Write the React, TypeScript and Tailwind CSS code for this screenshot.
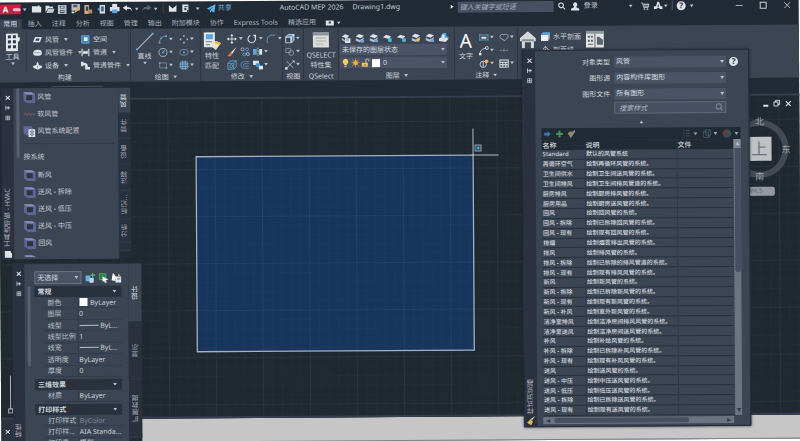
import type { ReactNode } from "react";

const SANS = "font-['Noto_Sans','Noto_Sans_CJK_SC',sans-serif]";

/* ---------- icon helpers ---------- */

const WHITE = "#dfe3e8";
const BLUE = "#5fa8dc";

function Svg({ children, className = "size-3" }: { children: ReactNode; className?: string }) {
  return (
    <svg viewBox="0 0 12 12" className={`${className} shrink-0`} fill="none" stroke={WHITE} strokeWidth="1" aria-hidden="true">
      {children}
    </svg>
  );
}

function Caret({ up = false }: { up?: boolean }) {
  return (
    <svg viewBox="0 0 4 3" className="h-[3px] w-1 shrink-0" aria-hidden="true">
      <path d={up ? "M0 3h4L2 0z" : "M0 0h4L2 3z"} fill="#b9c0ca" />
    </svg>
  );
}

const icons: Record<string, ReactNode> = {
  newFile: <path d="M0 2.500h7l1-1h1.500v1.500H11.500v7H0z" fill={WHITE} stroke="none" />,
  open: (
    <g stroke="none">
      <path d="M1 10V2h4l1 1h4v2H4z" fill={WHITE} />
      <path d="M4 5.500h8L10 10.500H2z" fill="#c3c9d1" />
    </g>
  ),
  save: (
    <g stroke="none">
      <path d="M0 0h12v12H0z" fill="#b9c0ca" />
      <path d="M3 1h6v3.500H3zM3 7h6v4H3z" fill="#4b5563" />
      <path d="M4 2h4v1.500H4zM4 8h4v1H4z" fill={WHITE} />
    </g>
  ),
  saveAs: (
    <g stroke="none">
      <path d="M1 0h10v8H1z" fill="#b9c0ca" />
      <path d="M3 1h5v3H3z" fill="#4b5563" />
      <path d="M4 11l1-3 5-4 1.500 1.500-5 4z" fill="#e0a948" />
      <path d="M1 9h3v2H1z" fill={WHITE} />
    </g>
  ),
  webOpen: (
    <g stroke="none">
      <path d="M1 0h6v12H1z" fill="#cdb489" />
      <path d="M3 2h3v6H3z" fill="#3a4452" />
      <path d="M6 6h5.500v5.500H6z" fill="#b58d4e" />
    </g>
  ),
  webSave: (
    <g stroke="none">
      <path d="M4 0h7v12H4z" fill={WHITE} />
      <path d="M5.500 2h4v7h-4z" fill="#3b6f9c" />
      <path d="M1 6l3-3v6z" fill={BLUE} />
    </g>
  ),
  print: (
    <g stroke="none">
      <path d="M3 0h6v4H3z" fill={WHITE} />
      <path d="M0 4h12v5H0z" fill={WHITE} />
      <path d="M3 7h6v4.500H3z" fill={BLUE} />
    </g>
  ),
  undo: <path d="M5 1.500L0 5l5 3.500V6.500c3 0 5.500 0 6.500 3C11.300 5.500 9 4 5 4z" fill={WHITE} stroke="none" />,
  redo: <path d="M7 1.500L12 5 7 8.500V6.500c-3 0-5.500 0-6.500 3C.7 5.500 3 4 7 4z" fill="#566170" stroke="none" />,
  mail: <path d="M0 1l6 5 6-5v10H0z" fill={WHITE} stroke="none" />,
  sheet: (
    <g stroke="none">
      <path d="M1 0h9v12H1z" fill={WHITE} />
      <path d="M4 3h5v1H4zM4 5h3v4H4zM8 8l4 2-4 2z" fill="#303946" />
    </g>
  ),
  send: <path d="M0 6L12 0 10 11.500 6 9 4.500 12V8L9 3 3.500 7.500z" fill="#5fb4ea" stroke="none" />,
  search: (
    <g strokeWidth="1.500">
      <circle cx="5" cy="5" r="3.500" />
      <path d="M7.500 7.500L11 11" />
    </g>
  ),
  user: <path d="M6 .500a3 3 0 0 1 1.500 5.500v1l4 2v2.500H.500V9l4-2V6A3 3 0 0 1 6 .500z" fill={WHITE} stroke="none" />,
  cart: (
    <g>
      <path d="M.500 2h2l1.500 6h6l1-4.500H3.500" />
      <path d="M4 4.500h6.500M4.300 6.300h6" />
      <circle cx="5" cy="10.300" r=".8" />
      <circle cx="9" cy="10.300" r=".8" />
    </g>
  ),
  autodesk: <path d="M5 0h2l2 6.500h3v3.500H8.500L6 8l-2.500 2H0V6.500h3zM6 3L5 7h2z" fill={WHITE} stroke="none" />,
  duct: (
    <g stroke="none">
      <path d="M3 2.500h9L9.500 9.500H0z" fill={WHITE} />
      <path d="M4.500 4.500H9L8 7.500H3.200z" fill="#3a4351" />
    </g>
  ),
  fitting: (
    <g stroke="none">
      <path d="M2 3l3-1h3l3 1 1 3-1 3-3 1H4L1 9 0 6z" fill={WHITE} />
      <path d="M2 6h8" stroke="#8b94a0" />
    </g>
  ),
  equip: (
    <g stroke="none">
      <path d="M4.500 3.500L6 .500l1.500 3V5L12 6.500v2L6 11.500 0 8.500v-2L4.500 5z" fill={WHITE} />
      <path d="M6 6v4" stroke="#7d8794" />
    </g>
  ),
  space: (
    <g>
      <path d="M1 1h10v10H1z" fill="#3f86bf" stroke="#69aee0" />
      <path d="M4 3h5v5H4z" fill="#d7ebfa" stroke="none" />
    </g>
  ),
  pipe: (
    <g>
      <path d="M1.500 1v10M10.500 1v10" strokeWidth="1.500" />
      <path d="M3.500 4c2 1 3 1 5 0v4c-2-1-3-1-5 0z" fill={WHITE} />
    </g>
  ),
  elbow: <path d="M0 1h3v1.500c5 0 6 2.500 6 5.500h3v3.500H5.500V8c0-2-.500-2.500-2.500-2.500V7H0z" fill={WHITE} stroke="none" />,
  arc: (
    <g stroke="#8da3b8">
      <path d="M2 10C2 5 5 2 10 2" />
      <path d="M1 9h2v2H1zM9 1h2v2H9zM3 3.500h2v2H3z" fill={BLUE} stroke="none" />
    </g>
  ),
  circle: (
    <g>
      <circle cx="6" cy="6" r="4.800" stroke="#b9c0ca" />
      <path d="M6 6l3-4" stroke={BLUE} />
      <path d="M5 5h2v2H5z" fill={BLUE} stroke="none" />
    </g>
  ),
  rect: (
    <g>
      <path d="M2 3h8v6H2z" stroke="#7f8b9a" />
      <path d="M1 2h2v2H1zM9 8h2v2H9z" fill={BLUE} stroke="none" />
    </g>
  ),
  points: <path d="M5 1h2v2H5zM1 5h2v2H1zM9 5h2v2H9zM5 9h2v2H5z" fill="#9fb0c2" stroke="none" />,
  ellipse: (
    <g>
      <ellipse cx="6" cy="6" rx="5" ry="3.500" stroke="#7c93a8" />
      <path d="M5 5h2v2H5z" fill={BLUE} stroke="none" />
    </g>
  ),
  hatch: (
    <g stroke={BLUE}>
      <path d="M2 2h8v8H2z" fill="#315f86" />
      <path d="M4.500 0v12M7.500 0v12M0 4.500h12M0 7.500h12" stroke="#b7c9da" strokeWidth=".7" />
    </g>
  ),
  move: (
    <g>
      <path d="M6 1v10M1 6h10" />
      <path d="M6 0l2 2.500H4zM6 12l2-2.500H4zM0 6l2.500-2v4zM12 6L9.500 4v4z" fill={WHITE} stroke="none" />
    </g>
  ),
  rotate: (
    <g>
      <path d="M4 2a4.500 4.500 0 1 0 5.500 1.500" strokeWidth="1.200" />
      <path d="M7 1h4v4z" fill={WHITE} stroke="none" />
    </g>
  ),
  fillet: (
    <g>
      <path d="M1.500 11V8C1.500 4 4 1.500 8 1.500" stroke={BLUE} />
      <path d="M8 1.500h3.500" stroke="#8d98a6" />
    </g>
  ),
  brush: (
    <g stroke="none">
      <path d="M11.500 0L6.500 8 4.500 6.500z" fill="#f0e2c0" />
      <path d="M6.500 8l-2 3H0L4.500 6.500z" fill="#e5783a" />
    </g>
  ),
  copy: (
    <g stroke="#b9c4d0">
      <circle cx="3" cy="3" r="1.800" />
      <circle cx="8.500" cy="3" r="1.800" stroke={BLUE} />
      <circle cx="5" cy="9" r="1.800" stroke={BLUE} />
      <circle cx="9.500" cy="8.500" r="1.800" />
    </g>
  ),
  mirror: (
    <g>
      <path d="M0 2.500h4.500v7H0z" fill={BLUE} stroke="none" />
      <path d="M6 1v10" strokeDasharray="2 1" />
      <path d="M7.500 2.500H11v7H7.500z" fill="#dce8f3" stroke="none" />
    </g>
  ),
  box3d: (
    <g stroke={BLUE}>
      <path d="M1 4h7v7H1zM1 4l3-3h7v7l-3 3M8 4l3-3" />
      <circle cx="5" cy="7.500" r="1.800" />
    </g>
  ),
  offset: <path d="M11 2H5a4 4 0 0 0 0 8h6M11 4.500H5.500a1.500 1.500 0 0 0 0 3H11" stroke="#5a8fc0" />,
  scale: (
    <g stroke="none">
      <path d="M0 1h7v5H0z" fill="#d7e6f3" />
      <path d="M3.500 4H8.500v4.500h-5z" fill="#3f94cf" />
      <path d="M7 7h5v4.500H7z" fill="#d7e6f3" />
    </g>
  ),
  viewCube: (
    <g>
      <path d="M1 4h6v7H1z" fill="#3a4351" />
      <path d="M1 4l3-3h7L8 4zM8 4l3-3v7l-3 3z" fill="#3f94cf" />
    </g>
  ),
  shapes: (
    <g stroke="#8f99a6">
      <path d="M1 2h6v5H1z" />
      <circle cx="7.500" cy="7.500" r="3" />
    </g>
  ),
  trim: (
    <g>
      <path d="M2 2l8 8M10 2l-8 8" stroke="#b9c0ca" />
      <path d="M8.500 1h3v3zM0 9h3v3H0z" fill={WHITE} stroke="none" />
    </g>
  ),
  layerProps: (
    <g stroke="none">
      <path d="M1 4l4-3 5 2-3 3z" fill={WHITE} />
      <path d="M1 6l4 2v2L1 8z" fill="#aeb6c1" />
      <path d="M5 6h6.500v5.500H5z" fill={WHITE} />
      <path d="M6.500 7.500h3v1h-3z" fill="#3b82b8" />
    </g>
  ),
  layerOff: (
    <g stroke="none">
      <path d="M1 4l4-3 6 2-4 3z" fill={WHITE} />
      <path d="M1 6l5 2 5-3-1 3-4 3-5-2z" fill="#b5bdc8" />
      <path d="M7 8h4v3H7z" fill={BLUE} />
    </g>
  ),
  layerPin: (
    <g stroke="none">
      <path d="M0 5l4-3 6 2-3 3z" fill={WHITE} />
      <circle cx="8.500" cy="8.500" r="2.500" fill="#47b3d1" />
    </g>
  ),
  layerSun: (
    <g stroke="none">
      <path d="M1 4l4-3 6 2-4 3z" fill={WHITE} />
      <path d="M1 6l5 2 5-3v3l-5 3-5-2z" fill="#b5bdc8" />
      <circle cx="8.500" cy="8.500" r="2" fill="#e9c25f" />
    </g>
  ),
  layerCurrent: (
    <g stroke="none">
      <path d="M2 4l3-4h4v4l3 1-3 3H3z" fill="#4c9fd6" />
      <path d="M0 7l4-2 8 2-4 4-8-1z" fill={WHITE} />
      <path d="M4 2h3v4H4z" fill="#dbeaf6" />
    </g>
  ),
  dim: (
    <g stroke={BLUE}>
      <path d="M1 2v8M11 2v8M1 3h10M1 9h10" />
      <path d="M3 5h6v2.500H3z" fill={WHITE} stroke="none" />
    </g>
  ),
  cloud: <path d="M2 7c-2-3 1-6 4-4 3-2 6 0 5 3L7 10z" stroke="#b5bdc8" />,
  leader: (
    <g>
      <path d="M1 11c0-5 3-7 8-8" />
      <circle cx="9.500" cy="3" r="1.800" />
      <path d="M0 9h3v3H0z" fill={WHITE} stroke="none" />
    </g>
  ),
  dashes: <path d="M1 6h3M5 6h2M8 6h3M6 4v4" stroke="#8b96a3" />,
  tag: (
    <g>
      <circle cx="5" cy="7" r="3.800" />
      <path d="M5 4v6" />
      <circle cx="9" cy="3.500" r="2.300" fill="#e9b64a" stroke="none" />
    </g>
  ),
  grid: <path d="M1 2h10v8.500H1zM1 4.500h10M1 7.500h10M4.500 4v6.500M8 4v6.500" strokeWidth="1.200" />,
  bulb: <path d="M6 .5a4 4 0 0 1 2 7.300V9H4V7.800A4 4 0 0 1 6 .5zM4.500 10h3v1.500h-3z" fill="#f3cf63" stroke="none" />,
  sun: (
    <g stroke="#f0ad3c">
      <circle cx="6" cy="6" r="2.500" fill="#f5bf4f" />
      <path d="M6 .5v11M.5 6h11M2 2l8 8M10 2l-8 8" />
    </g>
  ),
  lock: (
    <g>
      <path d="M6.500 6V3a2 2 0 0 1 4 0v1" stroke="#f0d59a" strokeWidth="1.300" />
      <path d="M1 6h8v5.500H1z" fill="#f3c463" stroke="none" />
      <path d="M4.500 8h1.500v2H4.500z" fill="#3a4351" stroke="none" />
    </g>
  ),
  cube: (
    <g stroke="none">
      <path d="M0 3.500L3 0h9L9.500 3.500z" fill="#4c9fd6" />
      <path d="M0 3.500h9.500V12H0z" fill="#eef1f4" />
      <path d="M9.500 3.500L12 0v8.500L9.500 12z" fill="#a9b3bf" />
    </g>
  ),
  section: (
    <g>
      <circle cx="6" cy="6" r="3" />
      <path d="M6 1v2M6 9v2M9 6h2.500" />
      <path d="M5 5h2v2H5z" fill={WHITE} stroke="none" />
    </g>
  ),
  arrowRight: <path d="M1 4h5V1.500L11 6l-5 4.500V8H1z" fill="#3f78a8" stroke="none" />,
  plus: <path d="M4.500 1h3v3.500H11v3H7.500V11h-3V7.500H1v-3h3.500z" fill="#3d9a56" stroke="none" />,
  tagBrush: <path d="M0 5l4-3 2 1 5-3 1 2-5 8-3 2-1-3z" fill="#8a8873" stroke="none" />,
  list: <path d="M1 2h2M1 6h2M1 10h2M5 2h6M5 6h6M5 10h6" stroke="#596471" strokeWidth="1.300" />,
  wireCube: <path d="M1 4h7v7H1zM1 4l3-3h7v7l-3 3M8 4l3-3M4 1v7h7" stroke="#56707f" />,
  wheel: (
    <g stroke="none">
      <path d="M6 6V.500A5.500 5.500 0 0 1 10.800 9z" fill="#37684f" />
      <path d="M6 6L10.800 9A5.500 5.500 0 0 1 1.200 9z" fill="#35557f" />
      <path d="M6 6L1.200 9A5.500 5.500 0 0 1 6 .5z" fill="#80413c" />
    </g>
  ),
  ductTool: (
    <g stroke="none">
      <path d="M0 1h8l4 2v9H4L0 9z" fill="#5f6794" />
      <path d="M0 1h8l4 2H3z" fill="#8990bb" />
      <path d="M3 4h6v5H3z" fill="#2d3444" />
    </g>
  ),
  flex: <path d="M0 7l2-2 1.500 2 2-2 1.500 2 2-2 1.500 2 1-1" stroke="#6c5560" strokeWidth="1.200" />,
  ductConfig: (
    <g stroke="none">
      <path d="M0 1h8l2 3v6H3L0 8z" fill="#6068a0" />
      <path d="M5 4h7v8H5z" fill="#d9dce1" />
      <path d="M6.500 6h4v1h-4zM6.500 8.500h4v1h-4zM8 5v6h1V5z" fill="#5a6370" />
    </g>
  ),
  selAdd: (
    <g stroke="none">
      <path d="M0 3h6v7H0z" fill="#67b2e4" />
      <path d="M5 6h5v6H5z" fill="#b9dcf4" />
      <path d="M8 0h1.500v2H12v1.500H9.500v2H8v-2H6V2h2z" fill="#51c074" />
    </g>
  ),
  selCursor: (
    <g>
      <path d="M1 1h8v7H1z" stroke="#4fae6b" fill="#2f7f4a" />
      <path d="M5 4l7 4.500-3 .5 1 3-2 .5-1-3-2 1.500z" fill="#fff" stroke="none" />
    </g>
  ),
  selFilter: (
    <g stroke="none">
      <path d="M5 4.500h7V12H5z" fill={WHITE} />
      <path d="M2 0l5 7H5v3L0 9z" fill="#fff" />
      <path d="M8 1l3 3H8z" fill="#e9b64a" />
      <path d="M7 7h4v1H7z" fill="#59636f" />
    </g>
  ),
};

function Ico({ name, className }: { name: string; className?: string }) {
  return <Svg className={className}>{icons[name]}</Svg>;
}

function IconButton({ name, label, caret = false, className = "w-[13px]", size = "size-[10px]" }: { name: string; label: string; caret?: boolean; className?: string; size?: string }) {
  return (
    <button type="button" aria-label={label} className={`flex shrink-0 items-center justify-between ${className}`}>
      <Ico name={name} className={size} />
      {caret && <Caret />}
    </button>
  );
}

function Help() {
  return (
    <button type="button" aria-label="帮助" className="flex size-[9px] shrink-0 items-center justify-center rounded-full bg-[#dfe3e8] text-[8px] leading-none font-bold text-[#28313d]">
      ?
    </button>
  );
}

/* ---------- title bar and ribbon tabs ---------- */

function TitleBar() {
  return (
    <header className="flex h-[14px] shrink-0 items-center text-[7px] leading-[10px] text-[#c3cad3]">
      <button type="button" aria-label="应用程序菜单" className="flex h-[10px] w-[22px] items-center gap-1 bg-[#d11b42] pl-1 font-bold text-white">
        <span className="text-[8px] leading-none">A</span>
        <span className="h-[3px] w-[9px] rounded-full bg-[#f3bcc8]" />
      </button>
      <span className="w-[11px] pl-[2px]"><Caret /></span>
      <nav aria-label="快速访问工具栏" className="flex items-center gap-[3px]">
        <IconButton name="newFile" label="新建" className="w-[10px]" />
        <IconButton name="open" label="打开" className="w-[10px]" />
        <IconButton name="save" label="保存" className="w-[10px]" size="size-[9px]" />
        <IconButton name="saveAs" label="另存为" className="w-[10px]" />
        <IconButton name="webOpen" label="从 Web 打开" className="w-[10px]" size="size-[9px]" />
        <IconButton name="webSave" label="保存到 Web" className="w-[10px]" size="size-[9px]" />
        <IconButton name="print" label="打印" className="w-[10px]" />
        <IconButton name="undo" label="放弃" caret className="w-4" />
        <IconButton name="redo" label="重做" caret className="w-4" />
        <span className="mx-[2px] h-[10px] w-px bg-[#3a4452]" />
        <IconButton name="mail" label="传递" className="w-[10px]" size="size-[8px]" />
        <IconButton name="sheet" label="图纸" caret className="w-[18px]" size="size-[8px]" />
        <button type="button" className="ml-1 flex items-center gap-[2px] text-[#7fb4d6]">
          <Ico name="send" className="size-[9px]" />
          共享
        </button>
      </nav>
      <h1 className="ml-12 flex gap-[9px] whitespace-nowrap">
        <span>AutoCAD MEP 2026</span>
        <span>Drawing1.dwg</span>
      </h1>
      <div className="ml-auto flex items-center">
        <span className="mr-1 border-y-2 border-l-[3px] border-y-transparent border-l-[#dfe3e8]" />
        <input aria-label="搜索" placeholder="键入关键字或短语" className="h-[11px] w-[96px] bg-[#465062] px-[2px] text-[7px] italic placeholder:text-[#a3abb6]" />
        <IconButton name="search" label="搜索" className="ml-1 w-[10px]" size="size-[8px]" />
        <button type="button" className="ml-[3px] flex items-center gap-1 whitespace-nowrap">
          <Ico name="user" className="size-[9px]" />
          登录
        </button>
        <span className="mr-2 ml-[31px]"><Caret /></span>
        <IconButton name="cart" label="商店" className="mr-[3px] w-[10px]" size="size-[9px]" />
        <IconButton name="autodesk" label="Autodesk App" caret className="w-[14px]" size="size-[9px]" />
        <span className="mx-1 h-[10px] w-px bg-[#4a5462]" />
        <Help />
        <span className="ml-1"><Caret /></span>
        <div className="ml-[42px] flex items-center gap-[17px] pr-2">
          <button type="button" aria-label="最小化" className="size-[7px]"><span className="block h-px bg-[#a5adb8]" /></button>
          <button type="button" aria-label="最大化" className="size-[7px] border border-[#c9cfd7]" />
          <button type="button" aria-label="关闭"><Svg className="size-[7px]"><path d="M1 1l10 10M11 1L1 11" strokeWidth="1.300" /></Svg></button>
        </div>
      </div>
    </header>
  );
}

const ribbonTabs = ["插入", "注释", "分析", "视图", "管理", "输出", "附加模块", "协作", "Express Tools", "精选应用"];

function RibbonTabs() {
  return (
    <nav aria-label="功能区选项卡" className="flex h-[13px] shrink-0 items-end text-[7px] leading-[10px] whitespace-nowrap text-[#a9b1bc]">
      <button type="button" className="h-[10px] w-[23px] bg-[#3c4554] text-[#d6dbe2]">常用</button>
      <div className="ml-[6px] flex items-end gap-[10px]">
        {ribbonTabs.map((tab) => (
          <button key={tab} type="button">{tab}</button>
        ))}
        <button type="button" aria-label="显示选项" className="flex h-[10px] items-center gap-[3px]">
          <span className="flex h-[5px] w-2 items-center justify-center bg-[#dfe3e8]"><span className="size-[2px] bg-[#303946]" /></span>
          <Caret />
        </button>
      </div>
    </nav>
  );
}

/* ---------- ribbon ---------- */

function Panel({ title, caret = false, width, children }: { title: string; caret?: boolean; width: string; children: ReactNode }) {
  return (
    <section className={`flex shrink-0 flex-col border-r border-[#2d3643] ${width}`}>
      <div className="flex h-11 items-start pt-1">{children}</div>
      <h2 className="flex h-[9px] items-center justify-center gap-1 whitespace-nowrap">
        {title}
        {caret && <Caret />}
      </h2>
    </section>
  );
}

function Big({ icon, lines, caret = false, width }: { icon: ReactNode; lines: string[]; caret?: boolean; width: string }) {
  return (
    <button type="button" className={`flex h-10 shrink-0 flex-col items-center gap-px whitespace-nowrap ${width}`}>
      {icon}
      {lines.map((line) => (
        <span key={line} className="leading-[9px]">{line}</span>
      ))}
      {caret && <Caret />}
    </button>
  );
}

function Tool({ icon, label }: { icon: string; label: string }) {
  return (
    <button type="button" className="flex h-[13px] items-center gap-[3px] whitespace-nowrap">
      <Ico name={icon} className="size-[9px]" />
      {label}
    </button>
  );
}

function ToolCaret({ icon, label }: { icon: string; label: string }) {
  return (
    <div className="flex items-center gap-[5px]">
      <Tool icon={icon} label={label} />
      <Caret />
    </div>
  );
}

function Cells({ cells, cols }: { cells: [string, boolean][]; cols: string }) {
  return (
    <div className={`grid auto-rows-[13px] items-center ${cols}`}>
      {cells.map(([name, caret]) => (
        <IconButton key={name} name={name} label={name} caret={caret} className={caret ? "w-[15px]" : "w-[10px]"} />
      ))}
    </div>
  );
}

function Ribbon() {
  return (
    <div className="flex h-[53px] shrink-0 bg-[#3c4554] text-[7px] leading-[9px] text-[#ccd2da]">
      <Panel title="构建" width="w-[132px]">
        <div className="w-[28px] border-r border-[#333c49]">
          <Big
            width="w-[27px]"
            caret
            lines={["工具"]}
            icon={
              <svg viewBox="0 0 14 18" className="h-[18px] w-[14px]" aria-hidden="true">
                <path d="M0 0h12v4h2v3l-2 2v9H0z" fill="#e6e9ed" />
                <path d="M2 2h3v3H2zM7 2h3v3H7zM2 7h3v3H2zM7 7h3v3H7zM2 12h3v3H2zM7 12h3v3H7z" fill="#303946" />
              </svg>
            }
          />
        </div>
        <div className="ml-[6px] w-12">
          <ToolCaret icon="duct" label="风管" />
          <ToolCaret icon="fitting" label="风管管件" />
          <ToolCaret icon="equip" label="设备" />
        </div>
        <div>
          <Tool icon="space" label="空间" />
          <ToolCaret icon="pipe" label="管道" />
          <ToolCaret icon="elbow" label="管道管件" />
        </div>
      </Panel>
      <Panel title="绘图" caret width="w-[70px]">
        <Big
          width="w-[27px]"
          caret
          lines={["直线"]}
          icon={
            <svg viewBox="0 0 18 18" className="size-[18px]" aria-hidden="true">
              <path d="M1 17L17 1" stroke="#9fabb8" strokeWidth="1.200" />
              <path d="M0 16h2v2H0zM16 0h2v2h-2z" fill="#5fa8dc" />
            </svg>
          }
        />
        <Cells
          cols="grid-cols-[21px_18px]"
          cells={[["arc", true], ["points", true], ["circle", true], ["ellipse", true], ["rect", true], ["hatch", true]]}
        />
      </Panel>
      <Panel title="修改" caret width="w-[82px]">
        <Big
          width="w-[22px]"
          lines={["特性", "匹配"]}
          icon={
            <svg viewBox="0 0 18 18" className="size-[18px]" aria-hidden="true">
              <path d="M1 0h11v15H1z" fill="#e4e8ed" />
              <path d="M3 2h7v5H3z" fill="#56a5dc" />
              <path d="M3 9h6v1H3zM3 12h4v1H3z" fill="#6c7683" />
              <path d="M8 14l5-5 5 2-5 7z" fill="#efe3bd" />
              <path d="M13 9l5 2-1 2-5-2z" fill="#e9b64a" />
            </svg>
          }
        />
        <div className="ml-1 w-14">
          <div className="flex h-[13px] items-center justify-between">
            <IconButton name="move" label="移动" caret className="w-4" />
            <IconButton name="rotate" label="旋转" caret className="w-4" />
            <IconButton name="fillet" label="圆角" caret className="w-4" />
          </div>
          <Cells
            cols="grid-cols-[13px_13px_16px]"
            cells={[["brush", false], ["copy", false], ["mirror", true], ["box3d", false], ["offset", false], ["scale", true]]}
          />
        </div>
      </Panel>
      <Panel title="视图" width="w-[21px]">
        <Cells cols="ml-[2px] grid-cols-[16px]" cells={[["viewCube", true], ["shapes", true], ["trim", true]]} />
      </Panel>
      <Panel title="QSelect" width="w-[35px]">
        <Big
          width="w-[34px]"
          lines={["QSELECT", "特性集"]}
          icon={
            <svg viewBox="0 0 18 18" className="size-[18px]" aria-hidden="true">
              <path d="M1 1h16v15H1z" fill="#dcdcd8" />
              <path d="M1 1h16v3H1z" fill="#8d949c" />
              <path d="M4 6h10v1H4zM4 9h10v1H4zM4 12h7v1H4z" fill="#a9aba6" />
            </svg>
          }
        />
      </Panel>
      <Panel title="图层" caret width="w-[116px]">
        <div className="w-full">
          <div className="flex h-[13px] items-center justify-between pr-[5px] pl-[2px]">
            <IconButton name="layerProps" label="图层特性" className="w-[10px]" />
            <IconButton name="layerOff" label="关闭图层" className="w-[10px]" />
            <IconButton name="layerOff" label="冻结图层" className="w-[10px]" />
            <IconButton name="layerPin" label="锁定图层" className="w-[10px]" />
            <IconButton name="layerPin" label="隔离图层" className="w-[10px]" />
            <IconButton name="layerSun" label="解冻图层" className="w-[10px]" />
            <IconButton name="layerOff" label="匹配图层" className="w-[10px]" />
            <IconButton name="layerCurrent" label="置为当前" className="w-[10px]" />
          </div>
          <Select label="图层状态" value="未保存的图层状态" className="mb-[2px] ml-px w-[107px]" />
          <div className="ml-px flex w-[107px] items-center gap-px bg-[#4a5466] pl-px">
            <Ico name="bulb" className="size-[9px]" />
            <Ico name="sun" className="size-[9px]" />
            <Ico name="lock" className="size-[9px]" />
            <span className="ml-px size-2 shrink-0 bg-white" />
            <Select label="图层" value="0" className="flex-1" />
          </div>
        </div>
      </Panel>
      <Panel title="注释" caret width="w-[63px]">
        <Big width="w-[22px]" lines={["文字"]} icon={<span className="text-[19px] leading-5 text-white">A</span>} />
        <Cells
          cols="ml-[2px] grid-cols-[20px_18px]"
          cells={[["dim", true], ["cloud", true], ["leader", true], ["dashes", false], ["tag", true], ["grid", true]]}
        />
      </Panel>
      <div className="flex flex-1 items-start gap-[5px] pt-1 pl-[2px]">
        <svg viewBox="0 0 16 17" className="mt-px h-[17px] w-4 shrink-0" aria-hidden="true">
          <path d="M8 0l8 7v3h-2v7h-3v-6H5v6H2v-7H0V7z" fill="#d5d8d8" />
          <path d="M2 8h12v2H2z" fill="#868d93" />
        </svg>
        <div>
          <Tool icon="cube" label="水平剖面" />
          <Tool icon="section" label="剖面线" />
        </div>
        <svg viewBox="0 0 18 17" className="mt-px h-[17px] w-[18px] shrink-0" aria-hidden="true">
          <path d="M0 0h18v17H0z" fill="#e3e3df" />
          <path d="M0 0h18v3H0z" fill="#8d949c" />
          <path d="M8.500 3h1v14h-1zM2 5h2v2H2zM5 5h2v2H5zM2 9h2v2H2zM5 9h2v2H5zM2 13h5v1H2zM11 6h2l4 3v5h-6z" fill="#5a6370" />
        </svg>
      </div>
    </div>
  );
}

function Select({ label, value, className }: { label: string; value: string; className: string }) {
  return (
    <div className={`relative bg-[#4a5466] ${className}`}>
      <select aria-label={label} className="block h-[11px] w-full appearance-none pr-2 pl-[2px] text-[7px] leading-[10px] text-[#d6dbe2]">
        <option>{value}</option>
      </select>
      <span className="pointer-events-none absolute inset-y-0 right-[2px] flex items-center"><Caret /></span>
    </div>
  );
}

/* ---------- palette chrome ---------- */

function PaletteStrip({ title, foot }: { title: string; foot?: ReactNode }) {
  return (
    <div className="flex w-3 shrink-0 flex-col items-center bg-[#2b3140] pt-1 text-[7px] text-[#aab2bd]">
      <button type="button" aria-label="关闭" className="h-[10px]"><Svg className="size-[5px]"><path d="M1 1l10 10M11 1L1 11" strokeWidth="2.500" /></Svg></button>
      <button type="button" aria-label="自动隐藏" className="h-[10px]"><Svg className="size-[5px]"><path d="M1 0v12M1 6h11M7 2v8" strokeWidth="2" /></Svg></button>
      <button type="button" aria-label="特性" className="h-[10px]"><Svg className="size-[5px]"><path d="M1 1h10v10H1zM1 6h10M6 1v10" strokeWidth="1.700" /></Svg></button>
      <h2 className="mt-auto rotate-180 leading-3 whitespace-nowrap [writing-mode:vertical-rl]">{title}</h2>
      {foot}
    </div>
  );
}

function SideTab({ label, active = false, height }: { label: string; active?: boolean; height: string }) {
  return (
    <button
      type="button"
      className={`flex w-full shrink-0 items-center justify-center ${height} ${active ? "bg-[#3c4554] text-[#dfe3e8]" : "border-b border-[#363f4d] bg-[#2a303e] text-[#9ba4b0]"}`}
    >
      <span className="rotate-180 leading-3 [writing-mode:vertical-rl]">{label}</span>
    </button>
  );
}

/* ---------- HVAC tool palette ---------- */

function ToolItem({ icon, label }: { icon: string; label: string }) {
  return (
    <button type="button" className="flex h-[17px] w-full shrink-0 items-center gap-[2px] whitespace-nowrap">
      <Ico name={icon} />
      {label}
    </button>
  );
}

function ToolPalette() {
  return (
    <aside className="absolute top-[86px] left-[2px] flex h-[171px] w-[129px] bg-[#222b36] text-[7px] leading-[10px] text-[#c6ccd5]">
      <PaletteStrip
        title="工具选项板 - HVAC"
        foot={<Svg className="mt-[3px] mb-px size-2"><path d="M1 1h9v3h2v7H1z" fill={WHITE} stroke="none" /></Svg>}
      />
      <div className="flex flex-1 overflow-hidden bg-[#3c4554] pl-[3px]">
        <div className="h-[70px] w-[3px] shrink-0 rounded-full bg-[#566173]" />
        <div className="flex-1 pl-1">
          <ToolItem icon="ductTool" label="风管" />
          <ToolItem icon="flex" label="软风管" />
          <ToolItem icon="ductConfig" label="风管系统配置" />
          <h3 className="mt-1 mr-1 flex h-[23px] items-center border-t border-[#333b49] pt-1">按系统</h3>
          <ToolItem icon="ductTool" label="新风" />
          <ToolItem icon="ductTool" label="送风 - 拆除" />
          <ToolItem icon="ductTool" label="送风 - 低压" />
          <ToolItem icon="ductTool" label="送风 - 中压" />
          <ToolItem icon="ductTool" label="回风" />
          <div className="mt-[3px] h-[3px] w-3 overflow-hidden"><Ico name="ductTool" /></div>
        </div>
      </div>
      <div className="flex w-3 shrink-0 flex-col">
        <SideTab label="风管" active height="h-[25px]" />
        <SideTab label="管件" height="h-[26px]" />
        <SideTab label="设备" height="h-[26px]" />
        <SideTab label="注释" height="h-[26px]" />
        <SideTab label="标记..." height="h-[29px]" />
        <SideTab label="分析" height="h-[23px]" />
        <SideTab label="" height="h-[8px]" />
      </div>
    </aside>
  );
}

/* ---------- properties palette ---------- */

type Prop = { name: string; value: string; mark?: "swatch" | "line"; dim?: boolean };

function PropGroup({ title, rows, height }: { title: string; rows: Prop[]; height: string }) {
  return (
    <section className="mb-[2px]">
      <h3 className="flex h-[11px] items-center justify-between bg-[#2a313e] pr-[5px] pl-[3px] font-bold">
        {title}
        <Caret />
      </h3>
      <table className={`ml-[10px] w-[77px] table-fixed border-collapse text-left ${height}`}>
        <tbody>
          {rows.map((row, i) => (
            <tr key={i} className="border-b border-[#333c4a]">
              <th scope="row" className="w-[33px] p-0 pl-[3px] font-normal whitespace-nowrap text-[#bbc2cc]">{row.name}</th>
              <td className={`border-l border-[#333c4a] p-0 pl-px whitespace-nowrap ${row.dim ? "text-[#7d8794]" : ""}`}>
                <span className="flex items-center gap-[2px]">
                  {row.mark === "swatch" && <span className="mr-px size-2 bg-white" />}
                  {row.mark === "line" && <span className="h-px w-[19px] bg-[#b9c0ca]" />}
                  {row.value}
                </span>
              </td>
            </tr>
          ))}
        </tbody>
      </table>
    </section>
  );
}

function PropertiesPalette() {
  return (
    <aside className="absolute top-[261px] left-3 flex h-[184px] w-[129px] border-t border-[#2a313e] bg-[#222b36] text-[7px] leading-[9px] text-[#ccd2da]">
      <PaletteStrip title="特性" foot={<span className="h-[10px]" />} />
      <div className="flex flex-1 overflow-hidden bg-[#3c4554] pl-[3px]">
        <div className="mt-[22px] h-20 w-[3px] shrink-0 rounded-full bg-[#566173]" />
        <div className="ml-1 w-[87px] pt-2">
          <div className="mb-[3px] flex h-[11px] items-center">
            <Select label="选择对象" value="无选择" className="mr-1 w-[47px] border border-[#667184]" />
            <IconButton name="selAdd" label="切换 PICKADD" className="w-[13px]" size="size-[10px]" />
            <IconButton name="selCursor" label="选择对象" className="w-[13px]" size="size-[10px]" />
            <IconButton name="selFilter" label="快速选择" className="w-[10px]" size="size-[10px]" />
          </div>
          <PropGroup
            title="常规"
            height="h-20"
            rows={[
              { name: "颜色", value: "ByLayer", mark: "swatch" },
              { name: "图层", value: "0" },
              { name: "线型", value: "ByL...", mark: "line" },
              { name: "线型比例", value: "1" },
              { name: "线宽", value: "ByL...", mark: "line" },
              { name: "透明度", value: "ByLayer" },
              { name: "厚度", value: "0" },
            ]}
          />
          <PropGroup title="三维效果" height="h-[12px]" rows={[{ name: "材质", value: "ByLayer" }]} />
          <PropGroup
            title="打印样式"
            height="h-[34px]"
            rows={[
              { name: "打印样式", value: "ByColor", dim: true },
              { name: "打印样...", value: "AIA Standa..." },
              { name: "打印表...", value: "模型" },
            ]}
          />
        </div>
      </div>
      <div className="flex w-[13px] shrink-0 flex-col">
        <SideTab label="设计" active height="h-[58px]" />
        <SideTab label="显示" height="h-[58px]" />
        <SideTab label="扩展数据" height="h-[58px]" />
      </div>
    </aside>
  );
}

/* ---------- style browser ---------- */

const styleRows: [string, string][] = [
  ["Standard", "默认的风管系统"],
  ["再循环空气", "绘制再循环风管的系统。"],
  ["卫生间供水", "绘制卫生间送风管的系统。"],
  ["卫生间排风", "绘制卫生间排风管道的系统。"],
  ["厨房排风", "绘制厨房排风管的系统。"],
  ["厨房用品", "绘制厨房送风管的系统。"],
  ["回风", "绘制回风管的系统。"],
  ["回风 - 拆除", "绘制已拆除回风管的系统。"],
  ["回风 - 现有", "绘制现有回风管的系统。"],
  ["排烟", "绘制烟雾排出风管的系统。"],
  ["排风", "绘制排风管的系统。"],
  ["排风 - 拆除", "绘制已拆除的排风管道的系统。"],
  ["排风 - 现有", "绘制现有排风风管的系统。"],
  ["新风", "绘制新风管的系统。"],
  ["新风 - 拆除", "绘制已拆除新风管的系统。"],
  ["新风 - 现有", "绘制现有新风管的系统。"],
  ["新风 - 补风", "绘制室外新风管的系统。"],
  ["洁净室排风", "绘制洁净房间排风风管的系统。"],
  ["洁净室送风", "绘制洁净房间送风管的系统。"],
  ["补风", "绘制补给风管的系统。"],
  ["补风 - 拆除", "绘制已拆除补风风管的系统。"],
  ["补风 - 现有", "绘制现有补风风管的系统。"],
  ["送风", "绘制送风管的系统。"],
  ["送风 - 中压", "绘制中压送风管的系统。"],
  ["送风 - 低压", "绘制低压送风管的系统。"],
  ["送风 - 拆除", "绘制已拆除送风管的系统。"],
  ["送风 - 现有", "绘制现有送风管的系统。"],
  ["送风 - 高压", "绘制高压送风管的系统。"],
];

function Field({ label, value, help = false }: { label: string; value: string; help?: boolean }) {
  return (
    <div className="flex h-4 items-center">
      <span className="w-[79px] pr-1 text-right">{label}</span>
      <Select label={label} value={value} className="w-[112px]" />
      {help && <span className="ml-[3px] flex"><Help /></span>}
    </div>
  );
}

function StyleBrowser() {
  return (
    <aside className="absolute top-[51px] right-[50px] flex h-[377px] w-[227px] border border-[#252d39] bg-[#3c4554] text-[7px] leading-[9px] text-[#d3d8df] shadow-[0_0_3px_#1b222c]">
      <PaletteStrip
        title="样式浏览器"
        foot={
          <Svg className="mt-px mb-px size-[10px]">
            <path d="M11 1L7 6 5 5z" fill={WHITE} stroke="none" />
            <path d="M1 9l4-4 3 3-2 4z" fill="#e9b64a" stroke="none" />
          </Svg>
        }
      />
      <div className="flex min-w-0 flex-1 flex-col pt-[3px] pr-2 pl-[6px]">
        <div className="-ml-[6px] h-[63px]">
          <Field label="对象类型" value="风管" help />
          <Field label="图形源" value="内容构件库图形" />
          <Field label="图形文件" value="所有图形" />
          <div className="ml-[79px] flex h-[12px] w-[112px] items-center border border-[#5d6879] bg-[#465062] pr-[2px]">
            <input aria-label="搜索样式" placeholder="搜索样式" className="min-w-0 flex-1 px-1 text-[7px] leading-[9px] italic placeholder:text-[#b3bac4]" />
            <Svg className="size-2"><g stroke="#7d8898" strokeWidth="1.500"><circle cx="5" cy="5" r="4" /><path d="M8 8l3 3" /></g></Svg>
          </div>
        </div>
        <div className="flex h-[11px] items-center justify-center"><Caret up /></div>
        <div className="flex h-3 shrink-0 items-center gap-1 bg-[#212a35] px-[2px]">
          <IconButton name="arrowRight" label="应用" className="w-2" size="size-2" />
          <IconButton name="plus" label="添加" className="w-2" size="size-2" />
          <IconButton name="tagBrush" label="应用样式" className="w-2" size="size-2" />
          <div className="ml-auto flex gap-[5px] opacity-80">
            <IconButton name="list" label="视图" caret className="w-[15px]" size="size-2" />
            <IconButton name="wireCube" label="显示" caret className="w-[15px]" size="size-[9px]" />
            <IconButton name="wheel" label="颜色" caret className="w-4" size="size-[9px]" />
          </div>
        </div>
        <div className="flex min-h-0 flex-1">
          <div className="flex-1 overflow-hidden">
            <table className="h-[286px] w-full table-fixed border-collapse text-left whitespace-nowrap">
              <thead>
                <tr className="bg-[#212a35]">
                  <th className="h-[10px] w-[43px] p-0 pl-px font-medium">名称</th>
                  <th className="w-[92px] p-0 pl-px font-medium">说明</th>
                  <th className="p-0 pl-px font-medium">文件</th>
                </tr>
              </thead>
              <tbody className="text-[6px] leading-[8px] font-medium">
                {styleRows.map(([name, text]) => (
                  <tr key={name} className="border-b border-[#28313d]">
                    <td className="p-0 pl-px">{name}</td>
                    <td className="border-l border-[#303946] p-0 pl-px">{text}</td>
                    <td className="border-l border-[#303946] p-0" />
                  </tr>
                ))}
              </tbody>
            </table>
          </div>
          <div className="flex w-[7px] shrink-0 flex-col items-center bg-[#6b747f]">
            <span className="flex h-[9px] w-full items-center justify-center bg-[#7f8894]"><Caret up /></span>
            <span className="h-[124px] w-[6px] rounded-b bg-[#465061]" />
            <span className="mt-auto mb-[3px] border-x-2 border-t-4 border-x-transparent border-t-[#303946]" />
          </div>
        </div>
        <div className="mt-px mr-2 mb-[2px] flex h-[7px] shrink-0 items-center bg-[#6b747f] px-[3px]">
          <span className="border-y-2 border-r-4 border-y-transparent border-r-[#303946]" />
          <span className="ml-1 h-[5px] w-[135px] rounded-full bg-[#465061]" />
          <span className="ml-auto border-y-2 border-l-4 border-y-transparent border-l-[#303946]" />
        </div>
      </div>
    </aside>
  );
}

/* ---------- drawing area ---------- */

function DrawingArea() {
  return (
    <main className="relative flex-1 overflow-hidden border-y-2 border-[#353e4c] bg-[#202830]">
      <svg className="absolute inset-0 size-full" role="img" aria-label="绘图区">
        <defs>
          <pattern id="minor" x="27" y="23" width="9.400" height="9.400" patternUnits="userSpaceOnUse">
            <path d="M0 .500h9.400M.500 0v9.400" stroke="#8fb0d8" strokeOpacity=".025" />
          </pattern>
          <pattern id="major" x="27" y="23" width="47" height="47" patternUnits="userSpaceOnUse">
            <path d="M0 .500h47M.500 0v47" stroke="#8fb0e8" strokeOpacity=".06" />
          </pattern>
        </defs>
        <rect x="196.500" y="57.500" width="277" height="195" fill="#18355e" />
        <rect width="100%" height="100%" fill="url(#minor)" />
        <rect width="100%" height="100%" fill="url(#major)" />
        <rect x="196.500" y="57.500" width="277" height="195" fill="none" stroke="#a3b1c2" strokeWidth="1.300" />
        <path d="M473.500 31v27M472 57.500h27" stroke="#b4bcc6" />
        <path d="M475.500 47.500h6v6h-6z" fill="#2b5b70" stroke="#8d9aa5" />
        <path d="M478 49.500h1.500v2H478z" fill="#5fd0e8" />
        <path d="M9.500 275v33M7.500 308.500h4v4h-4z" fill="none" stroke="#aab2bd" />
      </svg>
      <div className="absolute top-1 right-2 flex items-center gap-[5px]">
        <button type="button" aria-label="最小化视口" className="h-[7px] w-[5px] border-b-2 border-[#dfe3e8]" />
        <button type="button" aria-label="还原视口"><Svg className="size-[7px]"><path d="M1 4h7v7H1zM4 4V1h7v7H8" strokeWidth="1.700" /></Svg></button>
        <button type="button" aria-label="关闭视口"><Svg className="size-[6px]"><path d="M1 1l10 10M11 1L1 11" strokeWidth="2.300" /></Svg></button>
      </div>
      <div className="absolute top-[20px] right-[7px] flex w-[66px] flex-col items-center text-[9px] leading-[11px] text-[#9ba3ad]">
        <div className="relative flex size-[66px] items-center justify-center">
          <svg viewBox="0 0 66 66" className="absolute inset-0 size-full" aria-hidden="true">
            <circle cx="33" cy="33" r="26" fill="none" stroke="#454b55" strokeWidth="6" />
          </svg>
          <span className="absolute top-0">北</span>
          <span className="absolute right-[2px]">东</span>
          <span className="absolute bottom-0">南</span>
          <button type="button" className="relative size-6 bg-[#bfc1c4] text-[16px] leading-6 text-[#6b727c]">上</button>
        </div>
        <button type="button" className="mt-[5px] h-[9px] w-[30px] rounded-[2px] bg-[#9698a6] pl-[5px] text-left text-[6px] leading-[9px] text-[#62656f]">WCS</button>
      </div>
    </main>
  );
}

export default function App() {
  return (
    <div className="h-screen overflow-hidden bg-white">
      <div className={`relative flex h-screen -rotate-[0.35deg] flex-col bg-[#212a35] ${SANS}`}>
        <TitleBar />
        <RibbonTabs />
        <Ribbon />
        <div className="h-4 shrink-0 pt-1 pl-[52px]">
          <div className="h-px w-[52px] bg-[#465061]" />
        </div>
        <DrawingArea />
        <footer className="h-6 shrink-0 border-b border-[#7f8388] bg-[#c6c6c6]">
          <div className="flex h-6 w-3 items-center justify-center bg-[#2b3240]">
            <button type="button" aria-label="关闭命令行"><Svg className="size-[5px]"><path d="M1 1l10 10M11 1L1 11" strokeWidth="2.500" /></Svg></button>
          </div>
        </footer>
        <ToolPalette />
        <PropertiesPalette />
        <StyleBrowser />
      </div>
    </div>
  );
}
